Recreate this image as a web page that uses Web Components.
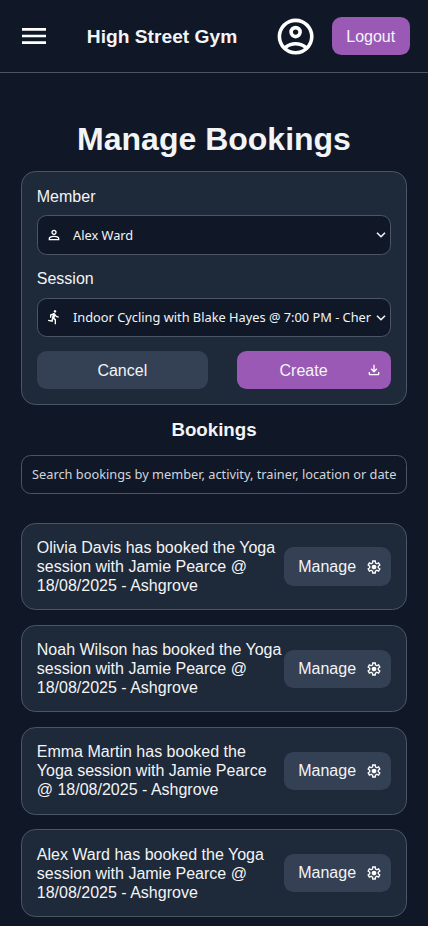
<!DOCTYPE html>
<html lang="en">
<head>
<meta charset="utf-8">
<title>High Street Gym</title>
<style>
html, body { margin: 0; height: 100%; }
body {
  --bg: #101828; --card: #1e2939; --line: #4a5565; --grey: #344054; --accent: #9b59b6;
  background: var(--bg); color: #f3f4f6; overflow: hidden;
  font: 16px/19.2px "Liberation Sans", Arial, sans-serif;
}
</style>
</head>
<body>
<gym-app></gym-app>
<script>
const icons = {
  menu: 'M120-240v-80h720v80H120Zm0-200v-80h720v80H120Zm0-200v-80h720v80H120Z',
  account: 'M234-276q51-39 114-61.5T480-360q69 0 132 22.5T726-276q35-41 54.5-93T800-480q0-133-93.5-226.5T480-800q-133 0-226.5 93.5T160-480q0 59 19.5 111t54.5 93Zm246-164q-59 0-99.5-40.5T340-580q0-59 40.5-99.5T480-720q59 0 99.5 40.5T620-580q0 59-40.5 99.5T480-440Zm0 360q-83 0-156-31.5T197-197q-54-54-85.5-127T80-480q0-83 31.5-156T197-763q54-54 127-85.5T480-880q83 0 156 31.5T763-763q54 54 85.5 127T880-480q0 83-31.5 156T763-197q-54 54-127 85.5T480-80Zm0-80q53 0 100-15.5t86-44.5q-39-29-86-44.5T480-280q-53 0-100 15.5T294-220q39 29 86 44.5T480-160Zm0-360q26 0 43-17t17-43q0-26-17-43t-43-17q-26 0-43 17t-17 43q0 26 17 43t43 17Z',
  person: 'M480-480q-66 0-113-47t-47-113q0-66 47-113t113-47q66 0 113 47t47 113q0 66-47 113t-113 47ZM160-160v-112q0-34 17.5-62.5T224-378q62-31 126-46.5T480-440q66 0 130 15.5T736-378q29 15 46.5 43.5T800-272v112H160Zm80-80h480v-32q0-11-5.5-20T700-306q-54-27-109-40.5T480-360q-56 0-111 13.5T260-306q-9 5-14.5 14t-5.5 20v32Zm240-320q33 0 56.5-23.5T560-640q0-33-23.5-56.5T480-720q-33 0-56.5 23.5T400-640q0 33 23.5 56.5T480-560Z',
  run: 'M520-40v-240l-84-80-40 176-276-56 16-80 192 40 64-324-72 28v136h-80v-188l158-68q35-15 51.5-19.5T480-720q21 0 39 11t29 29l40 64q26 42 70.5 69T760-520v80q-66 0-123.5-27.5T540-540l-24 120 84 80v300h-80Zm20-700q-33 0-56.5-23.5T460-820q0-33 23.5-56.5T540-900q33 0 56.5 23.5T620-820q0 33-23.5 56.5T540-740Z',
  download: 'M480-320 280-520l56-58 104 104v-326h80v326l104-104 56 58-200 200ZM240-160q-33 0-56.5-23.5T160-240v-120h80v120h480v-120h80v120q0 33-23.5 56.5T720-160H240Z',
  settings: 'm370-80-16-128q-13-5-24.5-12T307-235l-119 50L78-375l103-78q-1-7-1-13.5v-27q0-6.5 1-13.5L78-585l110-190 119 50q11-8 23-15t24-12l16-128h220l16 128q13 5 24.5 12t22.5 15l119-50 110 190-103 78q1 7 1 13.5v27q0 6.5-2 13.5l103 78-110 190-118-50q-11 8-23 15t-24 12L590-80H370Zm70-80h79l14-106q31-8 57.5-23.5T639-327l99 41 39-68-86-65q5-14 7-29.5t2-31.5q0-16-2-31.5t-7-29.5l86-65-39-68-99 42q-22-23-48.5-38.5T533-694l-13-106h-79l-14 106q-31 8-57.5 23.5T321-633l-99-41-39 68 86 64q-5 15-7 30t-2 32q0 16 2 31t7 30l-86 65 39 68 99-42q22 23 48.5 38.5T427-266l13 106Zm42-180q58 0 99-41t41-99q0-58-41-99t-99-41q-59 0-99.5 41T342-480q0 58 40.5 99t99.5 41Z'
};

const define = (name, html) => customElements.define(name, class extends HTMLElement {
  constructor() {
    super();
    this.attachShadow({ mode: 'open' }).innerHTML = html;
  }
});

customElements.define('gym-icon', class extends HTMLElement {
  connectedCallback() {
    if (this.shadowRoot) return;
    const s = this.getAttribute('size') || 16;
    this.attachShadow({ mode: 'open' }).innerHTML = `
      <style>:host { display: block; flex: none; width: ${s}px; height: ${s}px; } svg { display: block; }</style>
      <svg width="${s}" height="${s}" viewBox="0 -960 960 960" fill="#fff"><path d="${icons[this.getAttribute('name')]}"/></svg>`;
  }
});

define('gym-button', `
  <style>
    :host { display: flex; align-items: center; box-sizing: border-box; height: 38.4px; padding: 0 14.8px 0 14px;
      border-radius: 9.6px; background: var(--grey); }
    :host([accent]) { background: var(--accent); }
    .text { flex: 1; text-align: center; }
    ::slotted(gym-icon) { margin-left: 10px; margin-right: -5.4px; }
  </style>
  <span class="text"><slot></slot></span><slot name="icon"></slot>`);

define('gym-card', `
  <style>
    :host { display: block; box-sizing: border-box; border: 1px solid var(--line); border-radius: 14.4px;
      background: var(--card); padding: 14.4px; }
  </style>
  <slot></slot>`);

define('gym-select', `
  <style>
    :host { display: flex; align-items: center; box-sizing: border-box; height: 39.2px; border: 1px solid var(--line);
      border-radius: 9.6px; background: var(--bg); padding: 0 4px 0 8px;
      font: 12.8px/18px "Noto Sans", sans-serif; }
    .value { flex: 1; min-width: 0; margin: 0 4px 0 11.2px; overflow: hidden; white-space: nowrap; }
  </style>
  <slot name="icon"></slot><span class="value"><slot></slot></span>
  <svg width="10" height="7" viewBox="0 0 10 7" fill="none" stroke="#f3f4f6" stroke-width="1.6"><path d="M1 1.7 5 5.7 9 1.7"/></svg>`);

define('gym-header', `
  <style>
    :host { display: flex; align-items: center; justify-content: space-between; box-sizing: border-box;
      height: 73px; border-bottom: 1px solid var(--line); padding: 0.4px 18px 0; }
    .brand { font-size: 19.2px; font-weight: bold; }
    .right { display: flex; align-items: center; gap: 15px; }
  </style>
  <gym-icon name="menu" size="32"></gym-icon>
  <span class="brand">High Street Gym</span>
  <div class="right"><gym-icon name="account" size="43.2"></gym-icon><gym-button accent>Logout</gym-button></div>`);

define('booking-form', `
  <style>
    :host { display: block; }
    .label { display: block; margin-bottom: 9.4px; }
    .second { margin-top: 14.4px; }
    .actions { display: grid; grid-template-columns: 171px 154px; justify-content: space-between; margin-top: 14.2px; }
    .actions gym-button { padding-top: 0.6px; }
    .actions gym-button:first-child { padding-inline: 14.4px; }
  </style>
  <gym-card>
    <span class="label">Member</span>
    <gym-select><gym-icon slot="icon" name="person"></gym-icon>Alex Ward</gym-select>
    <span class="label second">Session</span>
    <gym-select><gym-icon slot="icon" name="run"></gym-icon>Indoor Cycling with Blake Hayes @ 7:00 PM - Cher</gym-select>
    <div class="actions">
      <gym-button>Cancel</gym-button>
      <gym-button accent>Create<gym-icon slot="icon" name="download"></gym-icon></gym-button>
    </div>
  </gym-card>`);

define('booking-search', `
  <style>
    :host { display: flex; align-items: center; box-sizing: border-box; height: 38.4px; border: 1px solid var(--line);
      border-radius: 9.6px; padding: 0 9.6px; color: #d1d5dc; white-space: nowrap;
      font: 12.8px/18px "Noto Sans", sans-serif; }
  </style>
  <span><slot></slot></span>`);

define('booking-row', `
  <style>
    :host { display: block; }
    gym-card { padding-block: 14.35px 14.25px; }
    .row { display: flex; align-items: center; }
    .text { flex: 1; min-width: 0; line-height: 19px; }
    gym-button { flex: none; width: 107px; }
  </style>
  <gym-card><div class="row">
    <span class="text"><slot></slot></span>
    <gym-button>Manage<gym-icon slot="icon" name="settings"></gym-icon></gym-button>
  </div></gym-card>`);

define('gym-app', `
  <style>
    :host { display: block; }
    main { display: flow-root; padding: 0 21.4px; }
    h1 { font-size: 32px; line-height: 38px; margin: 47px 0 13.4px; text-align: center; }
    h2 { font-size: 18.72px; line-height: 23px; margin: 13.4px 0 14.2px; text-align: center; }
    .list { display: grid; gap: 14.57px; margin-top: 29.05px; }
  </style>
  <gym-header></gym-header>
  <main>
    <h1>Manage Bookings</h1>
    <booking-form></booking-form>
    <h2>Bookings</h2>
    <booking-search>Search bookings by member, activity, trainer, location or date</booking-search>
    <div class="list">
      <booking-row>Olivia Davis has booked the Yoga session with Jamie Pearce @ 18/08/2025 - Ashgrove</booking-row>
      <booking-row>Noah Wilson has booked the Yoga session with Jamie Pearce @ 18/08/2025 - Ashgrove</booking-row>
      <booking-row>Emma Martin has booked the Yoga session with Jamie Pearce @ 18/08/2025 - Ashgrove</booking-row>
      <booking-row>Alex Ward has booked the Yoga session with Jamie Pearce @ 18/08/2025 - Ashgrove</booking-row>
    </div>
  </main>`);
</script>
</body>
</html>
